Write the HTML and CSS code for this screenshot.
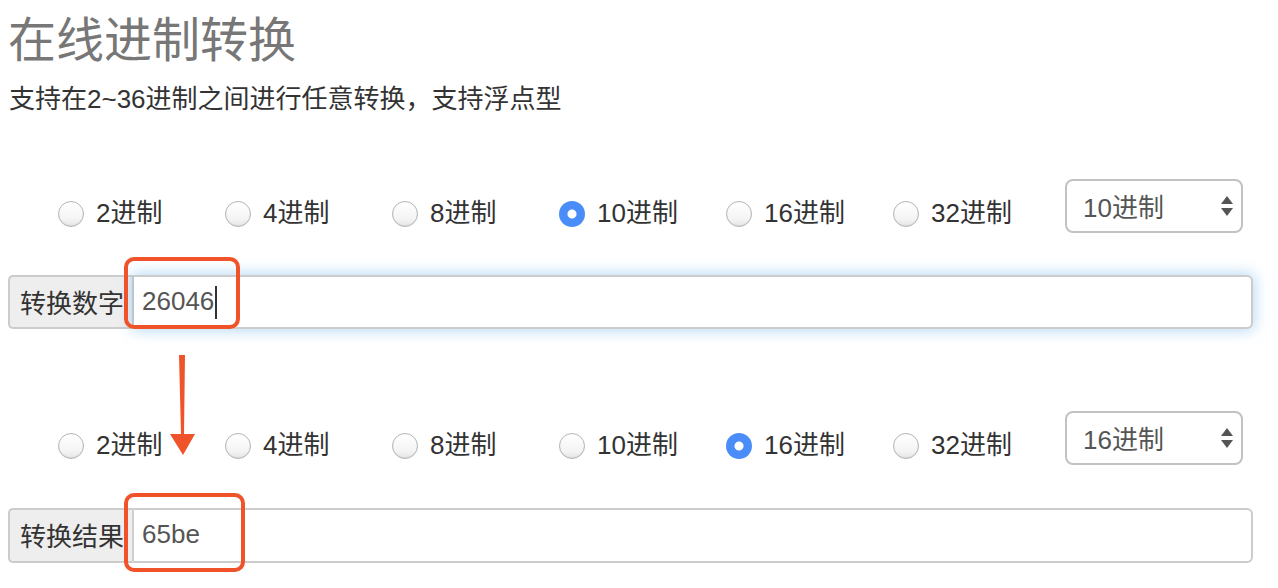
FILE: index.html
```html
<!DOCTYPE html>
<html lang="zh-CN">
<head>
<meta charset="utf-8">
<title>在线进制转换</title>
<link rel="stylesheet" href="styles.css">
</head>
<body>
<div class="page">
  <h1 class="title">在线进制转换</h1>
  <p class="subtitle">支持在2~36进制之间进行任意转换，支持浮点型</p>

  <div class="base-row row-from">
    <div class="radios">
      <label class="radio-item"><input type="radio" name="from"><span>2进制</span></label>
      <label class="radio-item"><input type="radio" name="from"><span>4进制</span></label>
      <label class="radio-item"><input type="radio" name="from"><span>8进制</span></label>
      <label class="radio-item"><input type="radio" name="from" checked><span>10进制</span></label>
      <label class="radio-item"><input type="radio" name="from"><span>16进制</span></label>
      <label class="radio-item"><input type="radio" name="from"><span>32进制</span></label>
    </div>
    <div class="select">
      <span class="select-text">10进制</span>
      <svg class="select-arrows" width="12" height="20" viewBox="0 0 12 20"><polygon points="6,0 12,8 0,8" fill="#555"/><polygon points="0,12 12,12 6,20" fill="#555"/></svg>
    </div>
  </div>

  <div class="input-group group-from">
    <span class="addon">转换数字</span>
    <div class="field focused"><span class="value">26046</span><span class="caret"></span></div>
    <div class="mark mark-from"></div>
  </div>

  <svg class="arrow" width="26" height="101" viewBox="0 0 26 101"><polygon points="9,0 15,0 14,79 25,79 13,100 0,79 11,79" fill="#f0532a"/></svg>

  <div class="base-row row-to">
    <div class="radios">
      <label class="radio-item"><input type="radio" name="to"><span>2进制</span></label>
      <label class="radio-item"><input type="radio" name="to"><span>4进制</span></label>
      <label class="radio-item"><input type="radio" name="to"><span>8进制</span></label>
      <label class="radio-item"><input type="radio" name="to"><span>10进制</span></label>
      <label class="radio-item"><input type="radio" name="to" checked><span>16进制</span></label>
      <label class="radio-item"><input type="radio" name="to"><span>32进制</span></label>
    </div>
    <div class="select">
      <span class="select-text">16进制</span>
      <svg class="select-arrows" width="12" height="20" viewBox="0 0 12 20"><polygon points="6,0 12,8 0,8" fill="#555"/><polygon points="0,12 12,12 6,20" fill="#555"/></svg>
    </div>
  </div>

  <div class="input-group group-to">
    <span class="addon">转换结果</span>
    <div class="field"><span class="value">65be</span></div>
    <div class="mark mark-to"></div>
  </div>
</div>
</body>
</html>
```

FILE: styles.css
```css
* { box-sizing: border-box; }

html, body {
  margin: 0;
  padding: 0;
  background: #fff;
}

body {
  font-family: "Liberation Sans", "Noto Sans CJK SC", sans-serif;
  color: #333;
}

.page {
  position: relative;
  width: 1278px;
  height: 588px;
  padding: 0 25px 0 8px;
  overflow: hidden;
}

.title {
  margin: 12px 0 0 0;
  font-size: 48px;
  line-height: 58px;
  font-weight: 400;
  color: #777;
}

.subtitle {
  margin: 14px 0 0 1px;
  font-size: 26px;
  line-height: 30px;
  color: #333;
}

.base-row {
  display: flex;
  align-items: flex-start;
  padding-left: 50px;
  padding-right: 10px;
}

.row-from { margin-top: 65px; }
.row-to { margin-top: 82px; }

.radios {
  display: flex;
  margin-top: 22px;
}

.radio-item {
  display: flex;
  align-items: center;
  width: 167px;
  height: 26px;
  font-size: 26px;
  line-height: 26px;
  color: #333;
}

.radio-item span { margin-top: -3px; }

.radio-item input {
  appearance: none;
  -webkit-appearance: none;
  margin: 0 12px 0 0;
  width: 26px;
  height: 26px;
  flex: none;
  border-radius: 50%;
  border: 1px solid #b4b4b4;
  background: linear-gradient(#ffffff, #f4f4f4 70%, #e6e6e6);
  box-shadow: inset 0 -1px 1px rgba(0,0,0,0.06);
}

.radio-item input:checked {
  border: none;
  background: radial-gradient(circle, #ffffff 0, #ffffff 4px, #4b8df8 5px);
  box-shadow: none;
}

.select {
  margin-left: auto;
  width: 178px;
  height: 54px;
  border: 2px solid #c2c2c2;
  border-radius: 8px;
  display: flex;
  align-items: center;
  justify-content: space-between;
  padding: 0 8px 0 16px;
  background: #fff;
}

.select-text {
  font-size: 26px;
  color: #555;
  margin-top: -2px;
}

.select-arrows { display: block; }

.input-group {
  position: relative;
  display: flex;
  height: 54px;
}

.group-from { margin-top: 42px; }
.group-to { margin-top: 43px; height: 55px; }

.addon {
  display: flex;
  align-items: center;
  width: 126px;
  flex: none;
  padding-left: 10px;
  padding-bottom: 2px;
  font-size: 26px;
  color: #333;
  background: #eeeeee;
  border: 2px solid #cccccc;
  border-right: 2px solid #cfcfcf;
  border-radius: 5px 0 0 5px;
}

.field {
  flex: 1;
  display: flex;
  align-items: center;
  padding-left: 8px;
  border: 2px solid #cccccc;
  border-left: none;
  border-radius: 0 6px 6px 0;
  background: #fff;
  font-size: 26px;
  color: #555;
}

.field .value { margin-top: -2px; }

.field.focused {
  box-shadow: 0 0 14px 2px rgba(102, 175, 233, 0.45);
}

.caret {
  display: inline-block;
  width: 2px;
  height: 33px;
  margin-left: 1px;
  background: #333;
}

.mark {
  position: absolute;
  border: 4px solid #f0532a;
  border-radius: 10px;
}

.mark-from {
  left: 116px;
  top: -18px;
  width: 116px;
  height: 72px;
}

.mark-to {
  left: 116px;
  top: -15px;
  width: 121px;
  height: 79px;
}

.arrow {
  position: absolute;
  left: 170px;
  top: 355px;
}
```
